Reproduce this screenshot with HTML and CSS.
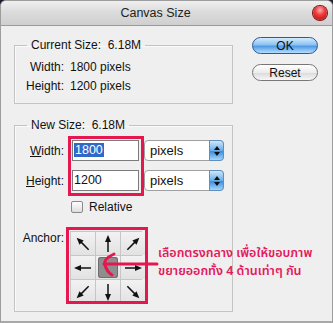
FILE: index.html
```html
<!DOCTYPE html>
<html lang="en">
<head>
  <meta charset="UTF-8">
  <title>Canvas Size</title>
  <link rel="stylesheet" href="styles.css">
</head>
<body>
  <div class="window">
    <div class="titlebar">
      <span class="title">Canvas Size</span>
      <span class="close"></span>
    </div>

    <div class="content">
      <div class="left">
        <fieldset class="group current">
          <legend>Current Size:&nbsp; 6.18M</legend>
          <div class="info-row"><span class="label">Width:</span><span>1800 pixels</span></div>
          <div class="info-row"><span class="label">Height:</span><span>1200 pixels</span></div>
        </fieldset>

        <fieldset class="group newsize">
          <legend>New Size:&nbsp; 6.18M</legend>
          <div class="size-fields">
            <div class="field-row">
              <span class="label"><u>W</u>idth:</span>
              <div class="input"><span class="selected">1800</span></div>
              <div class="select">pixels<span class="stepper"><i class="up"></i><i class="down"></i></span></div>
            </div>
            <div class="field-row">
              <span class="label"><u>H</u>eight:</span>
              <div class="input">1200</div>
              <div class="select">pixels<span class="stepper"><i class="up"></i><i class="down"></i></span></div>
            </div>
            <div class="mark mark-fields"></div>
          </div>

          <div class="check-row">
            <span class="checkbox"></span>
            <span>Relative</span>
          </div>

          <div class="anchor-row">
            <span class="label">Anchor:</span>
            <div class="anchor-grid">
              <div class="cell"><svg viewBox="-11 -11 22 22"><g transform="rotate(-45)"><line x1="0" y1="8" x2="0" y2="-3"/><polygon points="0,-9 -3,-2 3,-2"/></g></svg></div>
              <div class="cell"><svg viewBox="-11 -11 22 22"><g><line x1="0" y1="8" x2="0" y2="-3"/><polygon points="0,-9 -3,-2 3,-2"/></g></svg></div>
              <div class="cell"><svg viewBox="-11 -11 22 22"><g transform="rotate(45)"><line x1="0" y1="8" x2="0" y2="-3"/><polygon points="0,-9 -3,-2 3,-2"/></g></svg></div>
              <div class="cell"><svg viewBox="-11 -11 22 22"><g transform="rotate(-90)"><line x1="0" y1="8" x2="0" y2="-3"/><polygon points="0,-9 -3,-2 3,-2"/></g></svg></div>
              <div class="cell"><span class="center"></span></div>
              <div class="cell"><svg viewBox="-11 -11 22 22"><g transform="rotate(90)"><line x1="0" y1="8" x2="0" y2="-3"/><polygon points="0,-9 -3,-2 3,-2"/></g></svg></div>
              <div class="cell"><svg viewBox="-11 -11 22 22"><g transform="rotate(-135)"><line x1="0" y1="8" x2="0" y2="-3"/><polygon points="0,-9 -3,-2 3,-2"/></g></svg></div>
              <div class="cell"><svg viewBox="-11 -11 22 22"><g transform="rotate(180)"><line x1="0" y1="8" x2="0" y2="-3"/><polygon points="0,-9 -3,-2 3,-2"/></g></svg></div>
              <div class="cell"><svg viewBox="-11 -11 22 22"><g transform="rotate(135)"><line x1="0" y1="8" x2="0" y2="-3"/><polygon points="0,-9 -3,-2 3,-2"/></g></svg></div>
              <div class="mark mark-anchor"></div>
            </div>
          </div>
        </fieldset>
      </div>

      <div class="buttons">
        <button class="btn btn-ok">OK</button>
        <button class="btn">Reset</button>
      </div>
    </div>

    <!-- annotation drawn on top of the dialog -->
    <svg class="pointer" width="333" height="323" viewBox="0 0 333 323">
      <path d="M157 263 H104"/>
      <path d="M114 253 Q103 258 105 264 Q107 271 112 274"/>
    </svg>
    <div class="note">
      <span>เลือกตรงกลาง เพื่อให้ขอบภาพ</span>
      <span>ขยายออกทั้ง 4 ด้านเท่าๆ กัน</span>
    </div>
  </div>
</body>
</html>
```

FILE: styles.css
```css
html, body {
  margin: 0;
  padding: 0;
  background: #1c1f2e;
}

body {
  font-family: "Liberation Sans", Arial, sans-serif;
  font-size: 12px;
  color: #111;
}

.window {
  position: relative;
  width: 333px;
  height: 323px;
  box-sizing: border-box;
  background: #efefef;
  border: 1px solid #9d9d9d;
  border-bottom: 2px solid #a8a8a8;
  border-radius: 6px 6px 0 0;
  overflow: hidden;
}

.titlebar {
  height: 24px;
  display: flex;
  align-items: center;
  justify-content: center;
  position: relative;
  background: linear-gradient(#f0f0f0, #dcdcdc 45%, #cfcfcf);
  border-bottom: 1px solid #9a9a9a;
}

.title {
  font-size: 12.5px;
  color: #222;
  margin-right: 22px;
}

.close {
  position: absolute;
  right: 5px;
  top: 5px;
  width: 14px;
  height: 14px;
  border-radius: 50%;
  background: radial-gradient(circle at 50% 30%, #ffb0b0 0, #f03c3c 40%, #a80c0c 100%);
  box-shadow: 0 0 0 1px #7a1010;
}

.content {
  display: flex;
  padding: 12px 0 0 13px;
}

.left {
  width: 219px;
}

.group {
  margin: 0;
  padding: 0;
  border: 1px solid #c3c3c3;
  box-shadow: inset 1px 1px 0 #fafafa;
}

.group legend {
  margin-left: 12px;
  padding: 0 4px;
  line-height: 14px;
  font-size: 12px;
}

.current {
  padding: 6px 0 7px;
}

.newsize {
  margin-top: 14px;
  padding: 8px 0 7px;
}

.label {
  width: 49px;
  text-align: right;
  flex: none;
}

.info-row {
  display: flex;
  gap: 6px;
  line-height: 19px;
}

.size-fields {
  position: relative;
  display: flex;
  flex-direction: column;
  gap: 9px;
}

.field-row {
  display: flex;
  align-items: center;
  height: 21px;
}

.field-row .label {
  margin-right: 8px;
}

.input {
  width: 67px;
  height: 21px;
  box-sizing: border-box;
  border: 1px solid #7b7b7b;
  background: #fff;
  font-size: 12.5px;
  line-height: 19px;
  padding-left: 1px;
}

.selected {
  background: #3169c6;
  color: #fff;
  padding: 0 1px;
}

.select {
  position: relative;
  margin-left: 5px;
  width: 80px;
  height: 21px;
  box-sizing: border-box;
  border: 1px solid #a0a0a0;
  border-radius: 4px;
  background: #fff;
  font-size: 13px;
  line-height: 19px;
  padding-left: 5px;
}

.stepper {
  position: absolute;
  right: -1px;
  top: -1px;
  width: 15px;
  height: 21px;
  border-radius: 0 4px 4px 0;
  background: linear-gradient(#cfe7fb, #6aaee9 50%, #3c8fe0 55%, #a6d6fb);
  border: 1px solid #5f8fbf;
  box-sizing: border-box;
}

.stepper i {
  position: absolute;
  left: 4px;
  width: 0;
  height: 0;
  border-left: 3px solid transparent;
  border-right: 3px solid transparent;
}

.stepper .up {
  top: 5px;
  border-bottom: 4px solid #111;
}

.stepper .down {
  top: 11px;
  border-top: 4px solid #111;
}

.mark {
  position: absolute;
  border: 3px solid #e5174f;
  box-sizing: border-box;
}

.mark-fields {
  left: 53px;
  top: -4px;
  width: 76px;
  height: 60px;
}

.check-row {
  display: flex;
  align-items: center;
  gap: 6px;
  margin: 10px 0 0 56px;
  height: 12px;
}

.checkbox {
  width: 10px;
  height: 10px;
  border: 1px solid #8a8a8a;
  border-radius: 2px;
  background: linear-gradient(#fdfdfd, #dedede);
}

.anchor-row {
  display: flex;
  gap: 6px;
  margin-top: 18px;
}

.anchor-row .label {
  line-height: 14px;
}

.anchor-grid {
  position: relative;
  display: grid;
  grid-template-columns: repeat(3, 24px);
  grid-template-rows: repeat(3, 23px);
  border: 1px solid #c6c6c6;
  background: #c6c6c6;
  gap: 1px;
  width: 72px;
  box-sizing: border-box;
}

.cell {
  display: flex;
  align-items: center;
  justify-content: center;
  background: linear-gradient(#f2f2f2, #e2e2e2);
}

.cell svg {
  width: 22px;
  height: 22px;
}

.cell line {
  stroke: #111;
  stroke-width: 1.5;
}

.cell polygon {
  fill: #111;
}

.center {
  width: 20px;
  height: 21px;
  border-radius: 3px;
  background: #8e8e8e;
  box-shadow: inset 0 0 0 1px #6e6e6e;
}

.mark-anchor {
  left: -5px;
  top: -5px;
  width: 82px;
  height: 77px;
}

.buttons {
  display: flex;
  flex-direction: column;
  gap: 10px;
  margin: -1px 0 0 19px;
}

.btn {
  width: 66px;
  height: 17px;
  padding: 0;
  border: 1px solid #777;
  border-radius: 9px;
  background: linear-gradient(#ffffff, #ececec 50%, #dcdcdc 55%, #f7f7f7);
  font-family: "Liberation Sans", Arial, sans-serif;
  font-size: 12px;
  color: #111;
}

.btn-ok {
  border-color: #2b5a94;
  background: linear-gradient(#d4ebff, #8cc2f2 45%, #4f9ae4 55%, #b5defe);
}

.pointer {
  position: absolute;
  left: -1px;
  top: 0;
  pointer-events: none;
}

.pointer path {
  fill: none;
  stroke: #e5174f;
  stroke-width: 3;
  stroke-linecap: round;
}

.note {
  position: absolute;
  left: 157px;
  top: 244px;
  display: flex;
  flex-direction: column;
  font-family: "Noto Sans Thai", Tahoma, "DejaVu Sans", sans-serif;
  font-size: 12.5px;
  line-height: 18px;
  font-weight: 600;
  color: #e3195d;
  white-space: nowrap;
}
```
